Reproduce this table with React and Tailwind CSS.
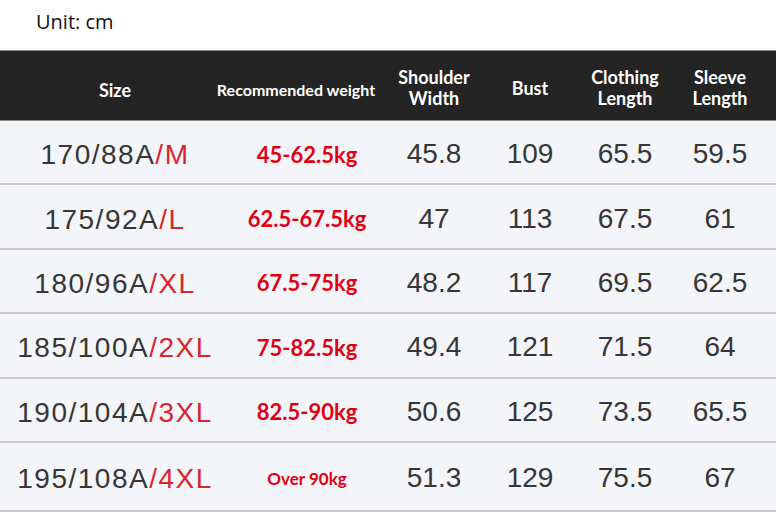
const rows = [
  { h: "170/88A", s: "M", w: "45-62.5kg", sh: "45.8", b: "109", cl: "65.5", sl: "59.5" },
  { h: "175/92A", s: "L", w: "62.5-67.5kg", sh: "47", b: "113", cl: "67.5", sl: "61" },
  { h: "180/96A", s: "XL", w: "67.5-75kg", sh: "48.2", b: "117", cl: "69.5", sl: "62.5" },
  { h: "185/100A", s: "2XL", w: "75-82.5kg", sh: "49.4", b: "121", cl: "71.5", sl: "64" },
  { h: "190/104A", s: "3XL", w: "82.5-90kg", sh: "50.6", b: "125", cl: "73.5", sl: "65.5" },
  { h: "195/108A", s: "4XL", w: "Over 90kg", sh: "51.3", b: "129", cl: "75.5", sl: "67", small: true },
];

const cols = "grid grid-cols-[230px_154px_100px_92px_98px_92px]";

export default function App() {
  return (
    <div className="w-[776px] h-[515px] bg-white overflow-hidden">
      <div className="h-[50px] flex items-center pl-[36px] pb-[6px] text-[20px] text-[#111] font-['Open_Sans',sans-serif]">
        Unit: cm
      </div>

      <div className={`${cols} h-[71px] pt-[5px] bg-[#242424] border-y border-[#8a8a8a] text-white font-bold font-['Lato',sans-serif] items-center text-center leading-[21px]`}>
        <div className="text-[18px] pt-[4px]">Size</div>
        <div className="flex justify-center pr-[22px] pt-[2px]">
          <span className="text-[16px] whitespace-nowrap">Recommended weight</span>
        </div>
        <div className="text-[18px]">Shoulder<br />Width</div>
        <div className="text-[18px]">Bust</div>
        <div className="text-[18px]">Clothing<br />Length</div>
        <div className="text-[18px]">Sleeve<br />Length</div>
      </div>

      {rows.map((r, i) => (
        <div
          key={i}
          className={`${cols} ${i === 5 ? "h-[69px]" : "h-[64.4px]"} pt-[4px] bg-[#f4f5f9] border-b-2 border-[#c9c9cb] items-center text-center text-[#363636] font-['Liberation_Sans',sans-serif] text-[28px]`}
        >
          <div className="tracking-[1.5px] pt-[2px]">
            {r.h}
            <span className="text-[#d6262c]">/{r.s}</span>
          </div>
          <div className={`font-['Lato',sans-serif] font-bold text-[#e00012] ${r.small ? "text-[17px]" : "text-[22px]"}`}>
            {r.w}
          </div>
          <div>{r.sh}</div>
          <div>{r.b}</div>
          <div>{r.cl}</div>
          <div>{r.sl}</div>
        </div>
      ))}
    </div>
  );
}
